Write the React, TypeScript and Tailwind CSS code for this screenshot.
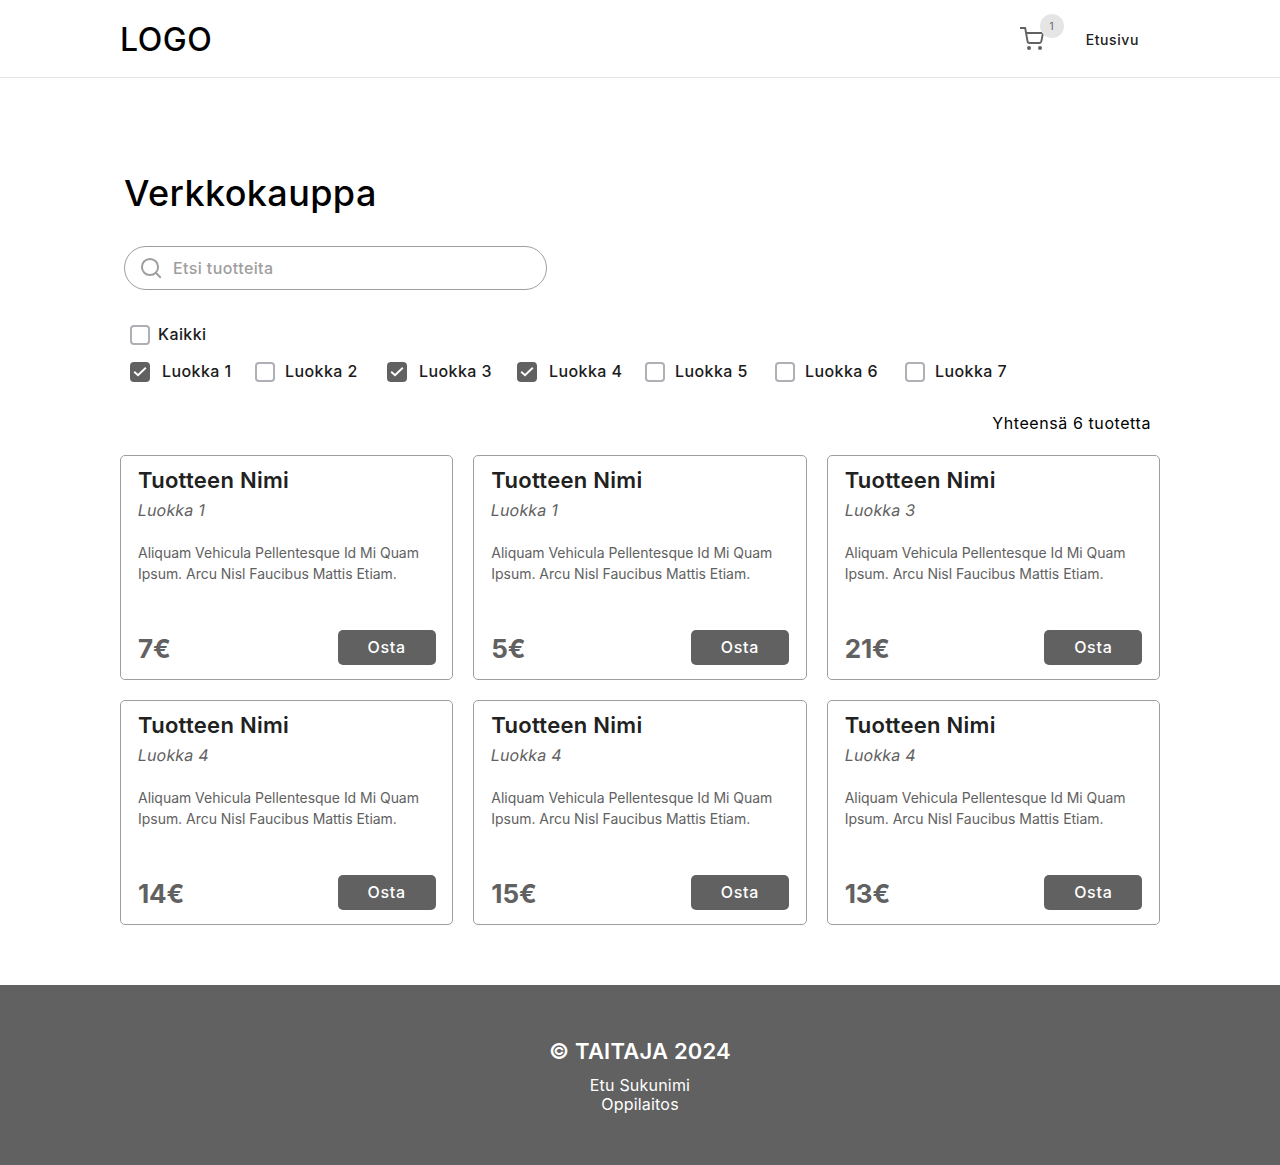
import React from "react";

const categories = [
  { name: "Luokka 1", checked: true, width: "w-[125px]" },
  { name: "Luokka 2", checked: false, width: "w-[132px]" },
  { name: "Luokka 3", checked: true, width: "w-[130px]" },
  { name: "Luokka 4", checked: true, width: "w-[128px]" },
  { name: "Luokka 5", checked: false, width: "w-[130px]" },
  { name: "Luokka 6", checked: false, width: "w-[130px]" },
  { name: "Luokka 7", checked: false, width: "w-[130px]" },
];

const products = [
  { category: "Luokka 1", price: "7€" },
  { category: "Luokka 1", price: "5€" },
  { category: "Luokka 3", price: "21€" },
  { category: "Luokka 4", price: "14€" },
  { category: "Luokka 4", price: "15€" },
  { category: "Luokka 4", price: "13€" },
];

function CartIcon() {
  return (
    <svg width="24" height="24" viewBox="0 0 24 24" fill="none" stroke="#616161" strokeWidth="1.9" strokeLinejoin="round">
      <path d="M0 1h5.2l2.3 13.2a2 2 0 0 0 2 1.8h9.8a2 2 0 0 0 2-1.6L23 6H6" />
      <circle cx="9" cy="21" r="2" fill="#616161" stroke="none" />
      <circle cx="20" cy="21" r="2" fill="#616161" stroke="none" />
    </svg>
  );
}

function Checkbox({ checked }: { checked: boolean }) {
  if (!checked) {
    return <span className="size-5 shrink-0 rounded-[4px] border-2 border-[#afafb6] bg-white" />;
  }
  return (
    <span className="flex size-5 shrink-0 items-center justify-center rounded-[4px] bg-[#616161]">
      <svg width="20" height="20" viewBox="0 0 20 20" fill="none" stroke="#fff" strokeWidth="1.9">
        <path d="M4.2 9.8 8 13.3 15.8 5.8" />
      </svg>
    </span>
  );
}

function ProductCard({ category, price }: { category: string; price: string }) {
  return (
    <article className="flex h-[225px] flex-col rounded-[5px] border border-[#9e9e9e] px-[17px] pb-[14px] pt-[9px]">
      <h2 className="text-[22px] font-semibold leading-[30px] tracking-[0.28px] text-[#212121]">Tuotteen Nimi</h2>
      <p className="origin-center -skew-x-[10deg] text-base leading-[30px] tracking-[0.2px] text-[#616161]">{category}</p>
      <p className="mt-[17px] whitespace-nowrap text-sm leading-[21px] tracking-[-0.03px] text-[#616161]">
        Aliquam Vehicula Pellentesque Id Mi Quam
        <br />
        Ipsum. Arcu Nisl Faucibus Mattis Etiam.
      </p>
      <div className="-mr-[0.3px] mt-auto flex items-center justify-between">
        <span className="pt-[3px] text-[26px] font-bold leading-8 tracking-[-0.1px] text-[#616161]">{price}</span>
        <button className="h-[35px] w-[98px] rounded-[5px] bg-[#616161] pb-0.5 text-base font-medium tracking-[0.7px] text-white">Osta</button>
      </div>
    </article>
  );
}

export default function App() {
  return (
    <div className="flex h-[1165px] flex-col bg-white font-['Inter',sans-serif] text-black">
      <header className="flex h-[78px] shrink-0 justify-between border-b border-[#e5e5e5] pl-[120px] pr-[141px]">
        <span className="mt-5 text-[32px] font-[450] leading-10 tracking-[0.5px]">LOGO</span>
        <nav className="flex">
          <div className="relative mr-[42px] mt-[27px] h-6 w-6">
            <CartIcon />
            <span className="absolute -top-[13px] left-5 flex size-6 items-center justify-center rounded-full bg-[#e5e5e5] text-[10px] text-[#616161]">1</span>
          </div>
          <a className="mt-[30px] text-sm font-medium leading-5 tracking-[0.6px] text-[#212121]">Etusivu</a>
        </nav>
      </header>

      <main className="px-[120px]">
        <h1 className="ml-1 mt-[93px] text-[36px] font-medium leading-[44px] tracking-[0.4px]">Verkkokauppa</h1>
        <label className="ml-1 mt-[31px] flex h-11 w-[423px] items-center rounded-full border border-[#9e9e9e] pl-[15px]">
          <svg width="24" height="24" viewBox="0 0 24 24" fill="none" stroke="#9e9e9e" strokeWidth="2" strokeLinecap="round">
            <circle cx="10" cy="11" r="8.1" />
            <path d="m16 17 4.2 4.2" />
          </svg>
          <span className="ml-[9px] text-base font-medium leading-6 tracking-[0.4px] text-[#9e9e9e]">Etsi tuotteita</span>
        </label>

        <div className="ml-[10px] mt-[35px] flex flex-col gap-[17px] text-base font-medium leading-[19px] tracking-[0.4px] text-[#1b1b1b]">
          <label className="flex gap-2">
            <Checkbox checked={false} />
            Kaikki
          </label>
          <div className="flex">
            {categories.map((c) => (
              <label key={c.name} className={`flex shrink-0 ${c.width} ${c.checked ? "gap-3" : "gap-2.5"}`}>
                <Checkbox checked={c.checked} />
                {c.name}
              </label>
            ))}
          </div>
        </div>

        <p className="mr-[9px] mt-[31px] text-right text-base leading-5 tracking-[0.58px]">Yhteensä 6 tuotetta</p>

        <section className="mt-[22px] grid grid-cols-3 gap-5">
          {products.map((p, i) => (
            <ProductCard key={i} {...p} />
          ))}
        </section>
      </main>

      <footer className="mt-auto flex h-[180px] shrink-0 flex-col items-center bg-[#616161] text-white">
        <p className="mt-[51px] text-[22px] font-semibold leading-[30px] tracking-[0.2px]">© TAITAJA 2024</p>
        <p className="mt-[10px] text-center text-base leading-[19px] tracking-[0.2px]">
          Etu Sukunimi
          <br />
          Oppilaitos
        </p>
      </footer>
    </div>
  );
}
